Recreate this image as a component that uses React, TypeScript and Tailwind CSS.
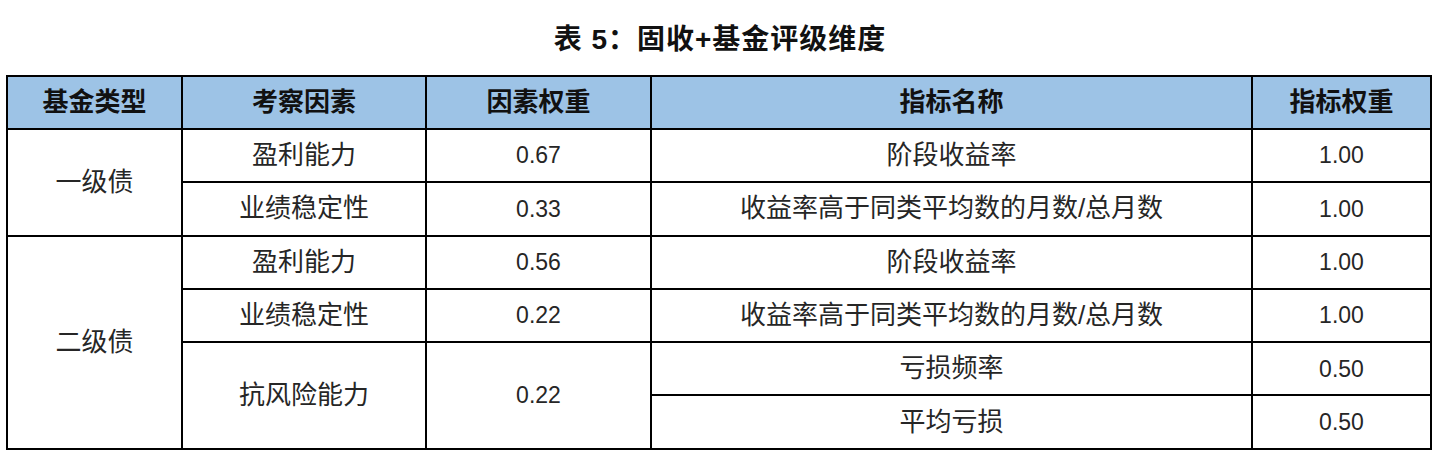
const cjk = "font-['Liberation_Sans','Noto_Sans_CJK_SC',sans-serif]";

type Row = {
  type?: { label: string; span: number };
  factor?: { label: string; span: number };
  weight?: { value: string; span: number };
  name: string;
  nameWeight: string;
};

const rows: Row[] = [
  {
    type: { label: "一级债", span: 2 },
    factor: { label: "盈利能力", span: 1 },
    weight: { value: "0.67", span: 1 },
    name: "阶段收益率",
    nameWeight: "1.00",
  },
  {
    factor: { label: "业绩稳定性", span: 1 },
    weight: { value: "0.33", span: 1 },
    name: "收益率高于同类平均数的月数/总月数",
    nameWeight: "1.00",
  },
  {
    type: { label: "二级债", span: 4 },
    factor: { label: "盈利能力", span: 1 },
    weight: { value: "0.56", span: 1 },
    name: "阶段收益率",
    nameWeight: "1.00",
  },
  {
    factor: { label: "业绩稳定性", span: 1 },
    weight: { value: "0.22", span: 1 },
    name: "收益率高于同类平均数的月数/总月数",
    nameWeight: "1.00",
  },
  {
    factor: { label: "抗风险能力", span: 2 },
    weight: { value: "0.22", span: 2 },
    name: "亏损频率",
    nameWeight: "0.50",
  },
  {
    name: "平均亏损",
    nameWeight: "0.50",
  },
];

const td = "border-2 border-black text-center align-middle p-0";

export default function App() {
  return (
    <div className={`w-[1440px] h-[461px] bg-white ${cjk}`}>
      <div className="h-[75px] flex items-center justify-center pt-[5px]">
        <h1 className="text-[28px] font-bold text-[#111] tracking-[1px]">
          表 5：固收+基金评级维度
        </h1>
      </div>
      <table className="ml-[6px] w-[1424px] border-collapse table-fixed">
        <colgroup>
          <col className="w-[175px]" />
          <col className="w-[244px]" />
          <col className="w-[225px]" />
          <col className="w-[601px]" />
          <col className="w-[179px]" />
        </colgroup>
        <thead>
          <tr className="h-[53px] bg-[#9dc3e6] text-[26px] font-bold text-[#111]">
            <th className={td}>基金类型</th>
            <th className={td}>考察因素</th>
            <th className={td}>因素权重</th>
            <th className={td}>指标名称</th>
            <th className={td}>指标权重</th>
          </tr>
        </thead>
        <tbody className="text-[#262626]">
          {rows.map((r, i) => (
            <tr key={i} className="h-[53.3px]">
              {r.type && (
                <td rowSpan={r.type.span} className={`${td} text-[26px]`}>
                  {r.type.label}
                </td>
              )}
              {r.factor && (
                <td rowSpan={r.factor.span} className={`${td} text-[26px]`}>
                  {r.factor.label}
                </td>
              )}
              {r.weight && (
                <td rowSpan={r.weight.span} className={`${td} text-[23px]`}>
                  {r.weight.value}
                </td>
              )}
              <td className={`${td} text-[26px]`}>{r.name}</td>
              <td className={`${td} text-[23px]`}>{r.nameWeight}</td>
            </tr>
          ))}
        </tbody>
      </table>
    </div>
  );
}
